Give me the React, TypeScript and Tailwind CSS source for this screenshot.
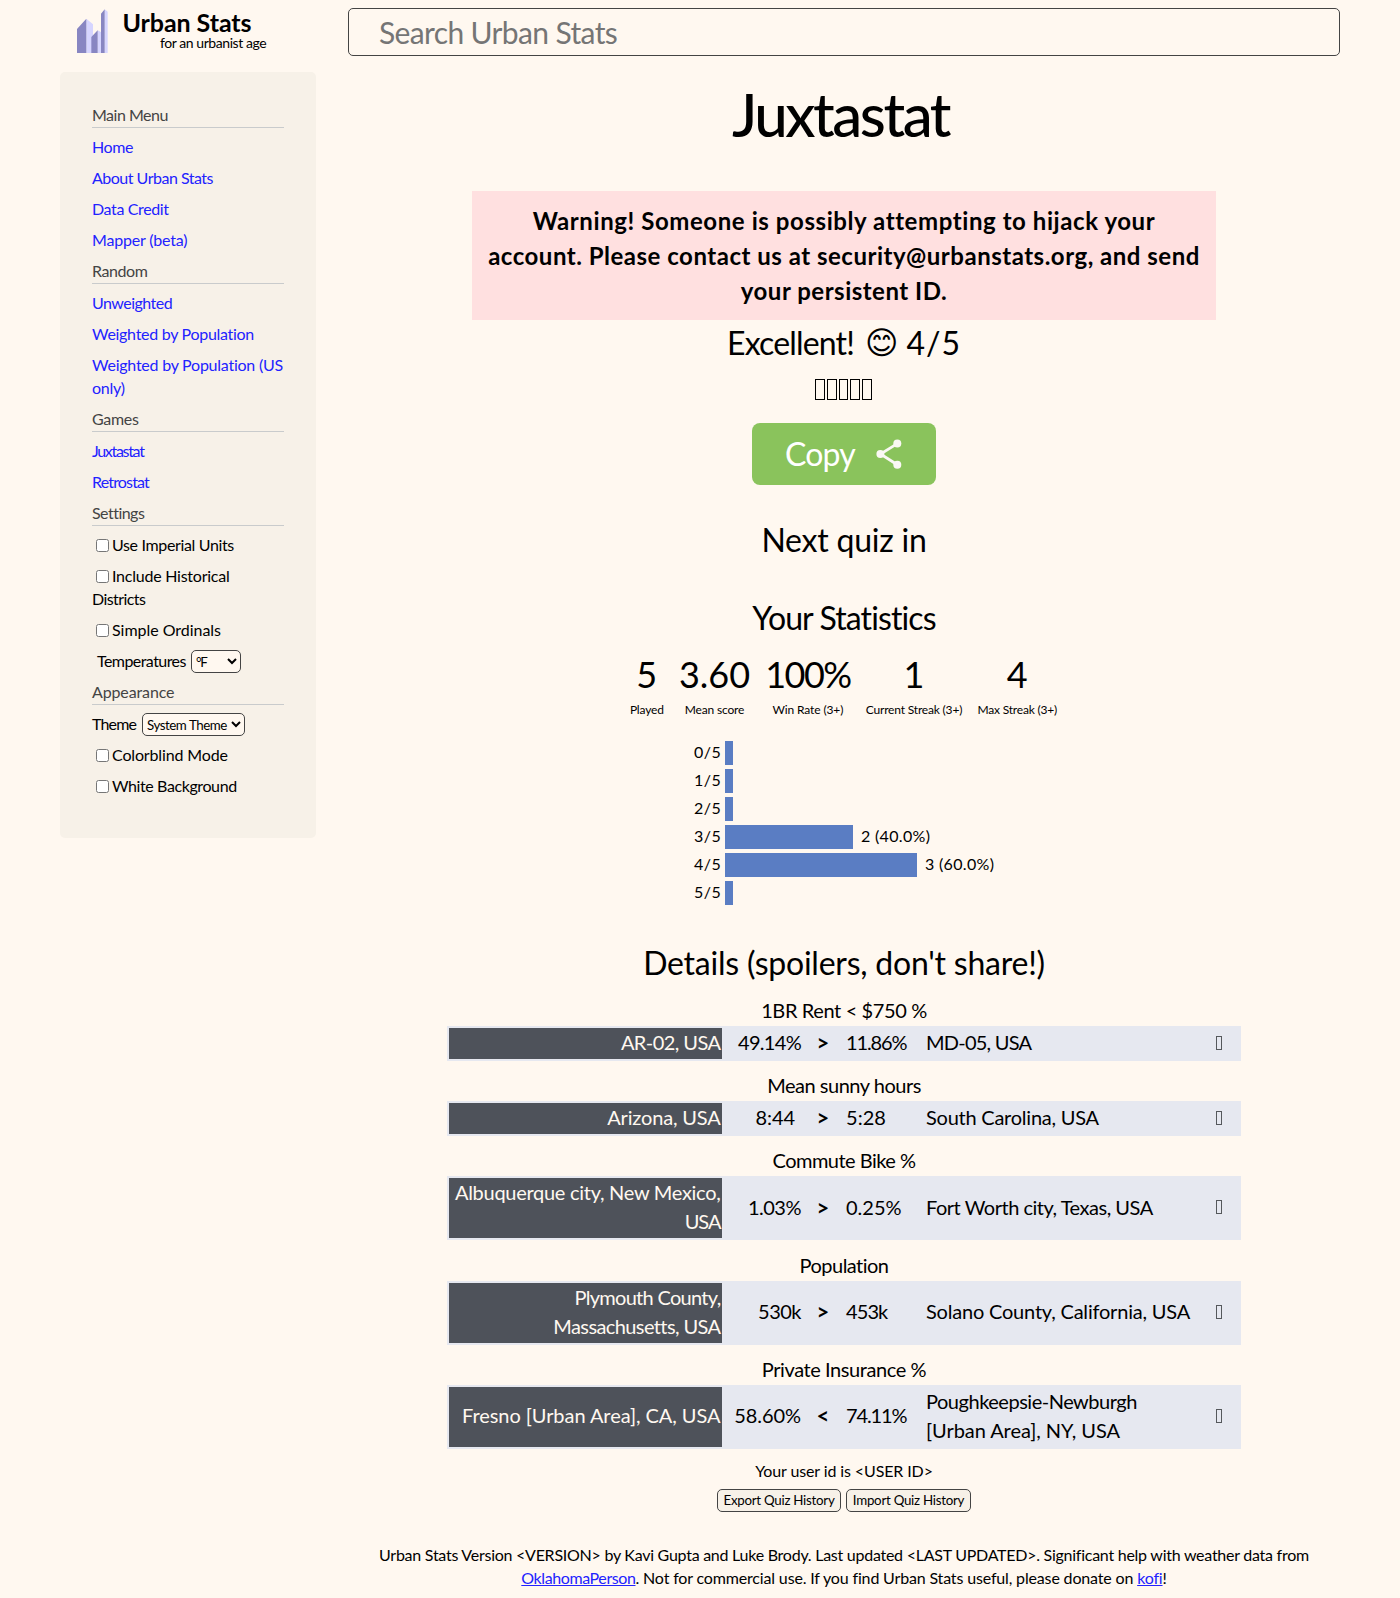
const Header = ({ className, children }: { className: string; children: string }) => (
  <div className="mb-2 border-b border-[#c9cbcc] text-[#444444]">
    <div className={`-mt-px mb-px h-[23px] ${className}`}>{children}</div>
  </div>
);

const NavLink = ({ className, children }: { className: string; children: React.ReactNode }) => (
  <div className="-mt-px mb-[9px]">
    <a href="#" className={`block text-[#2222ff] ${className}`}>{children}</a>
  </div>
);

const Check = ({ className, children }: { className: string; children: React.ReactNode }) => (
  <label className="-mt-px mb-[9px] block">
    <input type="checkbox" className="float-left mt-1.5 mr-[3px] mb-0 ml-1 h-[13px] w-[13px]" />
    <span className={`block ${className}`}>{children}</span>
  </label>
);

function Logo() {
  return (
    <div className="flex h-[72px] pl-4">
      <svg className="mt-[9px] ml-[0.5px] h-[44px] w-[31px]" viewBox="80 28 93 132">
        <path fill="#d6d5ff" d="M108 57 128 74V160H108zM142 92 153 98V160H142zM163 29 172 36V160H163z" />
        <path fill="#8886c2" d="M80 88 108 57V160H80zM123 112 142 92V160H123zM152 42 163 29V160H152z" />
      </svg>
      <div className="ml-[15px] pt-[7px]">
        <div className="text-[25px] leading-[30px] font-bold tracking-[-0.003em]">Urban Stats</div>
        <div className="-mt-[3px] ml-[37.5px] text-[14px] leading-[17px] tracking-[-0.031em]">for an urbanist age</div>
      </div>
    </div>
  );
}

function Sidebar() {
  return (
    <nav className="h-[766px] w-[256px] rounded-[5px] bg-[#f7f1e8] p-8 text-[16px] leading-[23px] whitespace-nowrap">
      <Header className="tracking-[-0.031em]">Main Menu</Header>
      <NavLink className="tracking-[-0.025em]">Home</NavLink>
      <NavLink className="tracking-[-0.031em]">About Urban Stats</NavLink>
      <NavLink className="tracking-[-0.023em]">Data Credit</NavLink>
      <NavLink className="tracking-[-0.012em]">Mapper (beta)</NavLink>
      <Header className="tracking-[-0.027em]">Random</Header>
      <NavLink className="tracking-[-0.033em]">Unweighted</NavLink>
      <NavLink className="tracking-[-0.018em]">Weighted by Population</NavLink>
      <NavLink className="tracking-[-0.015em]">Weighted by Population (US<br />only)</NavLink>
      <Header className="tracking-[-0.019em]">Games</Header>
      <NavLink className="tracking-[-0.082em]">Juxtastat</NavLink>
      <NavLink className="tracking-[-0.052em]">Retrostat</NavLink>
      <Header className="tracking-[-0.033em]">Settings</Header>
      <Check className="tracking-[-0.022em]">Use Imperial Units</Check>
      <Check className="tracking-[-0.015em]">Include Historical<br /><span className="tracking-[-0.036em]">Districts</span></Check>
      <Check className="tracking-[-0.002em]">Simple Ordinals</Check>
      <div className="mb-2 flex h-[23px] pl-[5px]">
        <span className="-mt-px w-[94px] tracking-[-0.035em]">Temperatures</span>
        <select className="h-[23px] w-[50px] rounded-[5px] border border-[#444444] bg-[#fff8f0] text-[13.333px] tracking-[-0.1em]">
          <option>°F</option>
        </select>
      </div>
      <Header className="tracking-[-0.008em]">Appearance</Header>
      <div className="mb-2 flex h-[23px]">
        <span className="-mt-px w-[50px] tracking-[-0.052em]">Theme</span>
        <select className="h-[23px] w-[103px] rounded-[5px] border border-[#444444] bg-[#fff8f0] text-[13.333px] tracking-[-0.035em]">
          <option>System Theme</option>
        </select>
      </div>
      <Check className="tracking-[-0.009em]">Colorblind Mode</Check>
      <Check className="tracking-[-0.025em]">White Background</Check>
    </nav>
  );
}

const stats = [
  { value: "5", label: "Played", v: "", l: "tracking-[-0.015em]" },
  { value: "3.60", label: "Mean score", v: "", l: "tracking-[-0.015em]" },
  { value: "100%", label: "Win Rate (3+)", v: "tracking-[-0.043em]", l: "tracking-[-0.01em]" },
  { value: "1", label: "Current Streak (3+)", v: "", l: "tracking-[-0.015em]" },
  { value: "4", label: "Max Streak (3+)", v: "", l: "tracking-[-0.015em]" },
];

const bars = [
  { label: "0/5", width: 8, note: "" },
  { label: "1/5", width: 8, note: "" },
  { label: "2/5", width: 8, note: "" },
  { label: "3/5", width: 128, note: "2 (40.0%)" },
  { label: "4/5", width: 192, note: "3 (60.0%)" },
  { label: "5/5", width: 8, note: "" },
];

type Txt = [text: string, tracking: string];
type Question = {
  title: Txt; margin: string; height: string; pad: string;
  left: Txt[]; a: Txt; op: string; b: Txt; right: Txt[];
};

const questions: Question[] = [
  {
    title: ["1BR Rent < $750 %", "tracking-[-0.019em]"], margin: "mt-[11px]", height: "h-[35px]", pad: "pb-[2px]",
    left: [["AR-02, USA", "tracking-[-0.028em]"]],
    a: ["49.14%", "tracking-[-0.035em]"], op: ">", b: ["11.86%", "tracking-[-0.056em]"],
    right: [["MD-05, USA", "tracking-[-0.038em]"]],
  },
  {
    title: ["Mean sunny hours", "tracking-[-0.024em]"], margin: "mt-[10px]", height: "h-[35px]", pad: "pb-[2px]",
    left: [["Arizona, USA", "tracking-[-0.009em]"]],
    a: ["8:44", "tracking-[-0.005em] pr-[6px]"], op: ">", b: ["5:28", "tracking-[0.002em]"],
    right: [["South Carolina, USA", "tracking-[-0.012em]"]],
  },
  {
    title: ["Commute Bike %", "tracking-[-0.026em]"], margin: "mt-[10px]", height: "h-[64px]", pad: "pb-[2px]",
    left: [["Albuquerque city, New Mexico,", "tracking-[-0.014em]"], ["USA", "tracking-[-0.05em]"]],
    a: ["1.03%", "tracking-[-0.025em]"], op: ">", b: ["0.25%", "tracking-[0em]"],
    right: [["Fort Worth city, Texas, USA", "tracking-[-0.024em]"]],
  },
  {
    title: ["Population", "tracking-[-0.027em]"], margin: "mt-[11px]", height: "h-[64px]", pad: "pb-[4px]",
    left: [["Plymouth County,", "tracking-[-0.035em]"], ["Massachusetts, USA", "tracking-[-0.03em]"]],
    a: ["530k", "tracking-[-0.025em]"], op: ">", b: ["453k", "tracking-[-0.045em]"],
    right: [["Solano County, California, USA", "tracking-[-0.01em]"]],
  },
  {
    title: ["Private Insurance %", "tracking-[-0.021em]"], margin: "mt-[10px]", height: "h-[64px]", pad: "pb-[4px]",
    left: [["Fresno [Urban Area], CA, USA", "tracking-[-0.003em]"]],
    a: ["58.60%", "tracking-[-0.003em]"], op: "<", b: ["74.11%", "tracking-[-0.056em]"],
    right: [["Poughkeepsie-Newburgh", "tracking-[-0.024em]"], ["[Urban Area], NY, USA", "tracking-[-0.003em]"]],
  },
];

const Lines = ({ lines, pad }: { lines: Txt[]; pad: string }) => (
  <div className={lines.length > 1 ? "pb-[2px]" : pad}>
    {lines.map(([text, tracking]) => <div key={text} className={tracking}>{text}</div>)}
  </div>
);

function QuestionRow({ q }: { q: Question }) {
  return (
    <div className={`w-[794px] text-[20px] leading-[29px] whitespace-nowrap ${q.margin}`}>
      <div className={`mb-[2px] text-center leading-[28px] ${q.title[1]}`}>{q.title[0]}</div>
      <div className={`grid grid-cols-[273px_79px_44px_81px_290px_6px] items-stretch bg-[#e6e8f0] p-[2px] ${q.height}`}>
        <div className="flex flex-col justify-center bg-[#4e525a] pr-[1.5px] text-right text-[#fff8f0]">
          <Lines lines={q.left} pad={q.pad} />
        </div>
        <div className={`self-center text-right ${q.pad} ${q.a[1]}`}>{q.a[0]}</div>
        <div className={`self-center text-center text-[22px] font-bold ${q.pad}`}>{q.op}</div>
        <div className={`self-center pl-[1px] ${q.pad} ${q.b[1]}`}>{q.b[0]}</div>
        <div className="self-center"><Lines lines={q.right} pad={q.pad} /></div>
        <div className="mb-[2px] h-[14px] w-[6px] self-center border border-[#55585c]" />
      </div>
    </div>
  );
}

export default function App() {
  return (
    <div className="flex h-[1598px] bg-[#fff8f0] pl-[60px] font-['Lato',sans-serif] text-black">
      <aside className="w-[256px] shrink-0">
        <Logo />
        <Sidebar />
      </aside>
      <main className="ml-8 flex w-[992px] shrink-0 flex-col items-center">
        <input
          placeholder="Search Urban Stats"
          className="mt-2 h-12 w-full rounded-[5px] border border-[#444444] pl-[30px] text-[30px] tracking-[-0.021em] placeholder:text-[#757575]"
        />
        <h1 className="mt-[22px] pr-[7px] text-[60px] leading-[72px] font-medium tracking-[-0.041em]">Juxtastat</h1>
        <div className="mt-[41px] h-[129px] w-[744px] bg-[#ffe0e0] pt-[12px] text-center text-[24px] leading-[35px] font-bold tracking-[0.021em] whitespace-nowrap">
          <div className="tracking-[0.024em]">Warning! Someone is possibly attempting to hijack your</div>
          <div>account. Please contact us at security@urbanstats.org, and send</div>
          <div>your persistent ID.</div>
        </div>
        <div className="flex h-[44px] pt-px text-[32px] leading-[44px]">
          <span className="w-[138px] tracking-[-0.026em]">Excellent!</span>
          <span className="w-[41.5px] font-['DejaVu_Sans']">😊</span>
          <span className="tracking-[0.03em]">4/5</span>
        </div>
        <div className="mt-[15px] mr-px flex gap-[2px]">
          {[0, 1, 2, 3, 4].map((i) => (
            <div key={i} className="h-[21px] w-[9.8px] border border-black" />
          ))}
        </div>
        <button className="mt-[23px] flex h-[62px] w-[184px] rounded-[8px] bg-[#8ac35c] pl-[33px] text-[32px] leading-[62px] tracking-[-0.026em] text-white">
          <span className="w-[91px] text-left">Copy</span>
          <svg className="mt-4 h-[31px] w-[26px]" viewBox="0 0 26 31" fill="#faf8f4">
            <path d="M21.3 4.6 4.5 15 21.3 25.7" fill="none" stroke="#faf8f4" strokeWidth="2.8" />
            <circle cx="21.3" cy="4.6" r="4" />
            <circle cx="4.4" cy="15" r="4" />
            <circle cx="21.3" cy="25.7" r="4" />
          </svg>
        </button>
        <div className="mt-[32px] text-[32px] leading-[46px] tracking-[-0.007em]">Next quiz in</div>
        <div className="mt-[32px] text-[32px] leading-[46px] tracking-[-0.028em]">Your Statistics</div>
        <div className="mt-[11px] mr-px flex gap-[15.2px] text-center whitespace-nowrap">
          {stats.map((s) => (
            <div key={s.label}>
              <div className={`text-[36px] leading-[44px] ${s.v}`}>{s.value}</div>
              <div className={`mt-[5px] text-[12px] leading-[17px] ${s.l}`}>{s.label}</div>
            </div>
          ))}
        </div>
        <div className="mt-[23px] ml-[346px] flex flex-col gap-1 self-start text-[16px] leading-[21px] whitespace-nowrap">
          {bars.map((b) => (
            <div key={b.label} className="flex h-6">
              <span className="w-[31px] tracking-[0.031em]">{b.label}</span>
              <div className="h-6 bg-[#5a7dc3]" style={{ width: b.width }} />
              <span className="pl-2 tracking-[0.02em]">{b.note}</span>
            </div>
          ))}
        </div>
        <div className="mt-[35px] text-[32px] leading-[46px] tracking-[-0.007em]">Details (spoilers, don't share!)</div>
        <div className="-mt-px">
          {questions.map((q) => <QuestionRow key={q.title[0]} q={q} />)}
        </div>
        <div className="mt-[10px] text-[16px] leading-[23px] tracking-[-0.007em]">Your user id is &lt;USER ID&gt;</div>
        <div className="mt-[7px] flex gap-[5px] text-[13.333px] leading-[19px] tracking-[-0.02em]">
          <button className="h-[23px] w-[124px] rounded-[5px] border border-[#444444] bg-[#f7f1e8] whitespace-nowrap">Export Quiz History</button>
          <button className="h-[23px] w-[125px] rounded-[5px] border border-[#444444] bg-[#f7f1e8] whitespace-nowrap">Import Quiz History</button>
        </div>
        <footer className="mt-[31px] text-center text-[16px] leading-[23px] tracking-[-0.01em] whitespace-nowrap">
          <div className="tracking-[-0.016em]">
            Urban Stats Version &lt;VERSION&gt; by Kavi Gupta and Luke Brody. Last updated &lt;LAST UPDATED&gt;. Significant help with weather data from
          </div>
          <div>
            <a href="#" className="tracking-[-0.025em] text-[#2222ff] underline">OklahomaPerson</a>. Not for commercial use. If you find Urban Stats useful, please donate on <a href="#" className="text-[#2222ff] underline">kofi</a>!
          </div>
        </footer>
      </main>
    </div>
  );
}
